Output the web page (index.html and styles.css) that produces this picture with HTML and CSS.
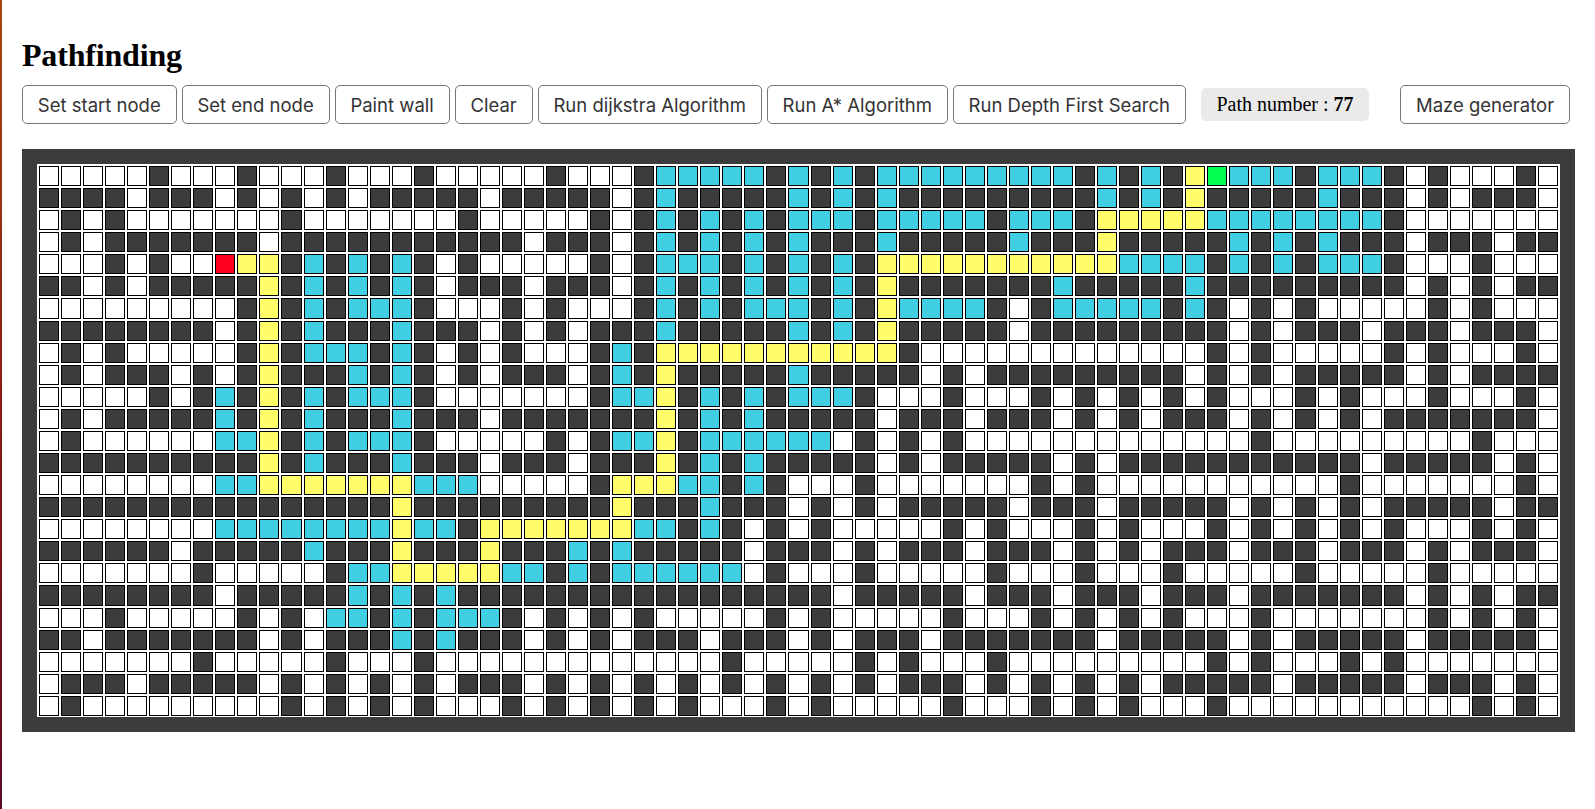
FILE: index.html
```html
<!DOCTYPE html>
<html>
<head>
    <meta charset="utf-8">
    <title>Pathfinding</title>
    <link rel="stylesheet" href="styles.css">
</head>
<body>
<div class="app">
    <h1 class="title">Pathfinding</h1>
    <div class="toolbar">
        <button type="button" class="btn">Set start node</button>
        <button type="button" class="btn">Set end node</button>
        <button type="button" class="btn">Paint wall</button>
        <button type="button" class="btn">Clear</button>
        <button type="button" class="btn">Run dijkstra Algorithm</button>
        <button type="button" class="btn">Run A* Algorithm</button>
        <button type="button" class="btn">Run Depth First Search</button>
        <div class="path-count">Path number : <b>77</b></div>
        <button type="button" class="btn btn-maze">Maze generator</button>
    </div>
    <div class="board">
        <div class="grid" id="grid"></div>
    </div>
</div>

<script type="text/javascript">
    // . empty, # wall, c visited, y path, S start, E end
    let rows = [
        ".....#...#...#...#....." + "#...#ccccc#c#c#ccccccccc#c#c#yEccc#ccc#.#...#.",
        "####.###.#.#.#.#####.##" + "###.#c#####c#c#c#########c#c#y#####c###.#.###.",
        ".#.#.......#.......#..." + "..#.#c#c#c#ccc#ccccc#ccc#yyyyycccccccc#.......",
        ".#.#######.###########." + "###.#c#c#c#c###c#####c###y#####c#c#c###.###.##",
        "...#.#..Syy#c#c#c#.#..." + "..#.#ccc#c#c#c#yyyyyyyyyyycccc#c#c#ccc#...#...",
        "##.#.#####y#c#c#c#.###." + "###.#c#c#c#c#c#y#######c#####c#########.#.#.##",
        ".........#y#c#ccc#...#." + "#...#c#c#ccc#c#ycccc#.#ccccc#c#.#.#.....#.#...",
        "########.#y#c###c###.#." + "#.###c#####c#c#y#####.#########.#.###.###.###.",
        ".#.#.....#y#ccc#c#.#.#." + "..#c#yyyyyyyyyyy#.............#.#.....#.#...#.",
        ".#.###.#.#y###c#c#.#.##" + "#.#c#y#####c#####.#.#########.#.#.#####.#.####",
        ".....#.#c#y#c#ccc#....." + "..#ccy#c#c#ccc#...#...#.#.#.#.#...#.#...#...#.",
        ".#.#####c#y#c###c###.##" + "#####y#c#c#####.###.###.#.#.###.#.#.#.#######.",
        ".#......ccy#c#ccc#....." + "#.#ccy#cccccc.#.#.#.............#.........#...",
        "##########y#c###c###.##" + "#.###y#c#c#####.#.#####.#.###########.#####.#.",
        "........ccyyyyyyyccc..." + "..#yyycc#c#...#.......#.#...........#.......#.",
        "################y######" + "###y###c###.#.#.#####.###.#####.#.#.#.#####.##",
        "........ccccccccycc#yyy" + "yyyycc#c#.#.#.....#.#...#.#...#.#.#.#.#...#.#.",
        "######.#####c###y###y##" + "#c#c#####.###.#.###.###.#.#.###.###.###.#.###.",
        ".......#.....#ccyyyyycc" + "#c#cccccc.#...#.....#...#...#.....#.....#.....",
        "########.#####c#c#c####" + "#############.#####.###.###.###.#######.#.#.##",
        "...#.....#.#.cc#c#ccc#." + "#.#.#.....#.#.....#...#.#.#.#...#.......#.#.#.",
        "##.#######.#.###c#c###." + "#.#.###.###.#.###.#######.#####.#.#####.#####.",
        ".......#.....#...#....." + "........#.....#.#...#.........#.#...#.#.......",
        ".###.#####.#.#.#.#.###." + "#.#.#.#.#.#.#.#.###.#.#.#.#.#####.#####.###.#.##",
        ".#.........#.#.#.#...#." + "#.#.#.#...#.#.....#...#.#.#...#...........#.#..."
    ];
    let classes = { ".": "", "#": "wall", "c": "visited", "y": "path", "S": "start", "E": "end" };
    let grid = document.getElementById("grid");

    rows.forEach((row) => {
        for (let i = 0; i < 69; i++) {
            let cell = document.createElement("div");
            cell.className = ("cell " + classes[row[i]]).trim();
            grid.appendChild(cell);
        }
    });
</script>
</body>
</html>
```
FILE: styles.css
```css
html, body {
    margin: 0;
    height: 100%;
    background: white;
}

body {
    border-left: 2px solid #a5480f;
    border-image: linear-gradient(#a5480f, #8a1a14 50%, #5c0a24) 1;
    box-sizing: border-box;
    font-family: "Liberation Serif", serif;
    overflow: hidden;
}

.app {
    padding: 37px 20px 0 20px;
}

.title {
    margin: 0 0 11px 0;
    font-size: 32px;
    line-height: 37px;
    letter-spacing: -0.18px;
    font-weight: bold;
    color: black;
}

.toolbar {
    display: flex;
    align-items: center;
    gap: 5px;
    height: 39px;
}

.btn {
    height: 39px;
    padding: 0 14.85px;
    background: white;
    border: 1px solid #767676;
    border-radius: 5px;
    font-family: Inter, "Liberation Sans", sans-serif;
    font-size: 18.5px;
    color: #333;
    white-space: nowrap;
}

.btn-maze {
    margin-left: 26px;
}

.path-count {
    margin-left: 10px;
    height: 33px;
    line-height: 33px;
    padding: 0 15.5px;
    background: #eaeaea;
    border-radius: 5px;
    font-size: 20px;
    color: black;
    white-space: nowrap;
}

.board {
    margin-top: 25px;
    width: 1553px;
    box-sizing: border-box;
    border: 15px solid #3c3c3c;
}

.grid {
    display: grid;
    grid-template-columns: repeat(69, 1fr);
    grid-auto-rows: 20.08px;
    gap: 2px;
    padding: 2px 2px 1px 2px;
    background: white;
}

.cell {
    box-sizing: border-box;
    border: 1px solid black;
    background: white;
}

.wall {
    background: #3c3c3c;
}

.visited {
    background: #40cee3;
}

.path {
    background: #fffe6a;
}

.start {
    background: #ff0020;
}

.end {
    background: #00ff50;
}
```
